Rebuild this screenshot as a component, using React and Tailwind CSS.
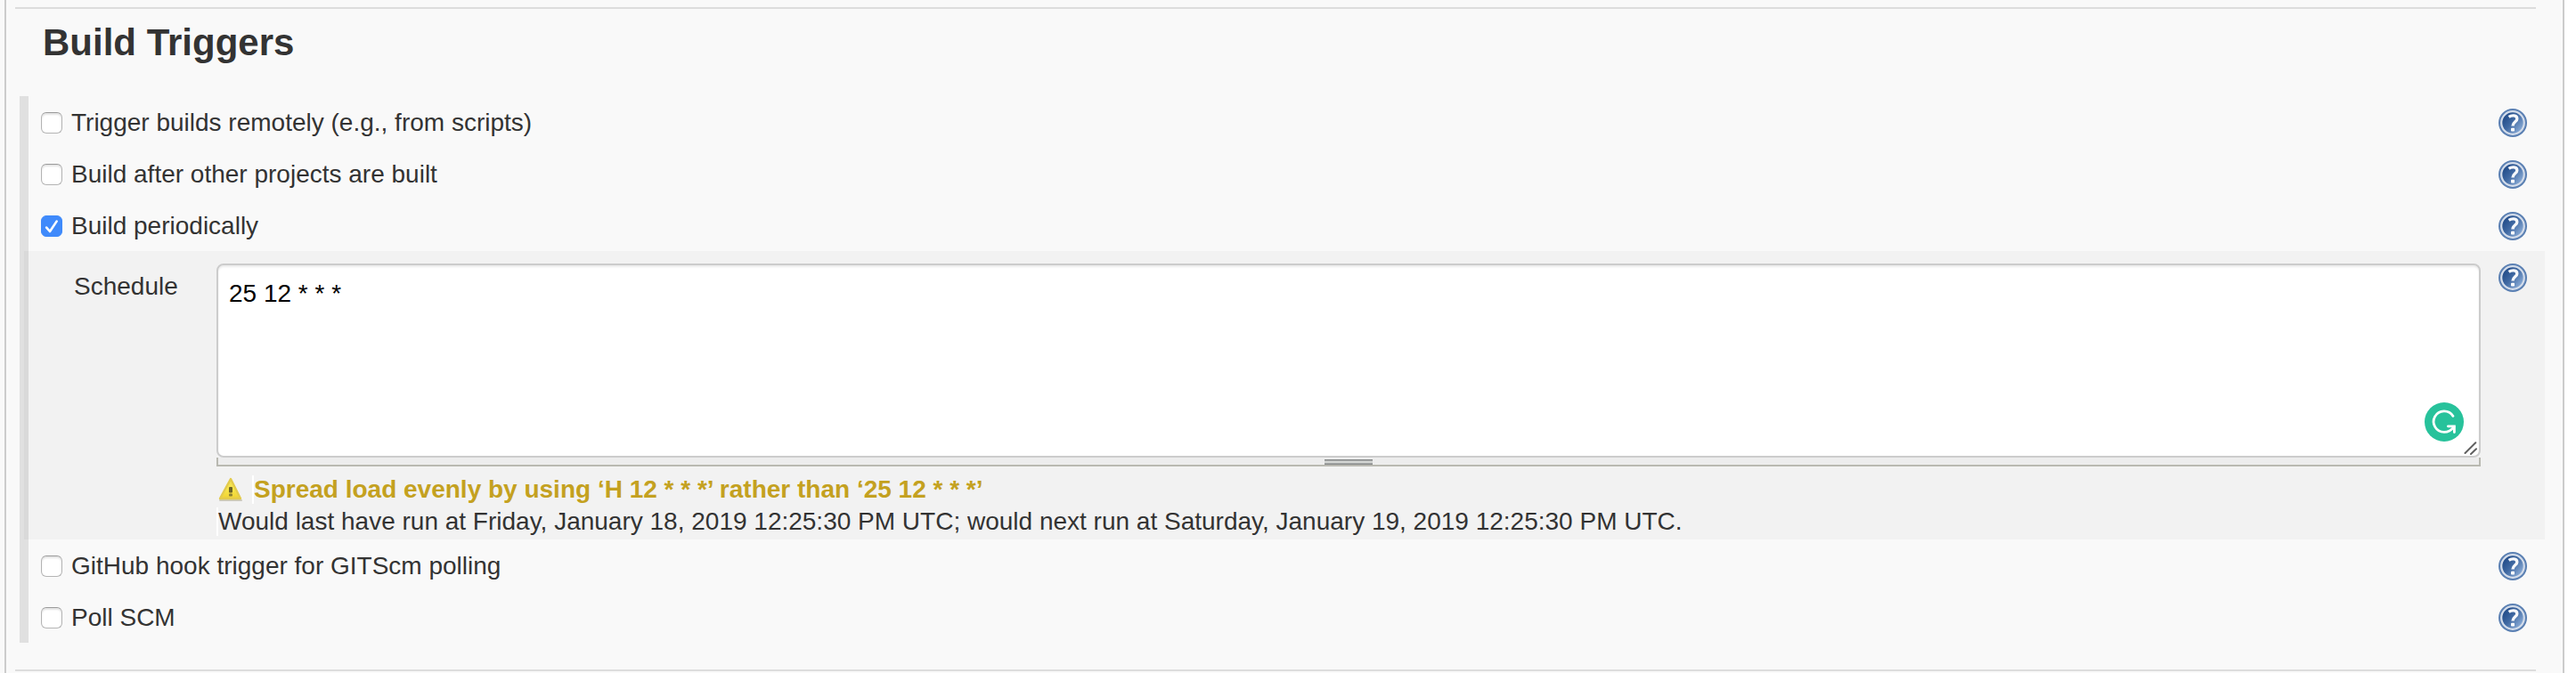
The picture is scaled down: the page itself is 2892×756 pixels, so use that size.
import { useState } from "react";

function HelpIcon() {
  return (
    <svg viewBox="0 0 32 32" className="block size-8" aria-hidden="true">
      <defs>
        <linearGradient id="helpFill" x1="0.1" y1="0.2" x2="0.9" y2="0.85">
          <stop offset="0" stopColor="#204a87" />
          <stop offset="0.45" stopColor="#416aa3" />
          <stop offset="1" stopColor="#8fb0da" />
        </linearGradient>
      </defs>
      <circle cx="16" cy="16" r="16" fill="#5b80b3" />
      <circle cx="16" cy="16" r="12.8" fill="url(#helpFill)" stroke="#d3dcea" strokeWidth="2.2" />
      <path
        d="M11.6 9.4C14.6 7.2 20.8 7 20.8 11.4C20.8 14.8 16 14.8 16 19.6"
        fill="none"
        stroke="#f6f8fb"
        strokeWidth="3.4"
      />
      <rect x="14" y="21.8" width="4" height="3.8" rx="0.8" fill="#fff" />
    </svg>
  );
}

function HelpButton({ topic }) {
  return (
    <button type="button" aria-label={`Help for ${topic}`} className="mr-5 size-8 shrink-0 rounded-full">
      <HelpIcon />
    </button>
  );
}

function WarningIcon() {
  return (
    <svg viewBox="0 0 32 32" className="size-8 shrink-0" aria-hidden="true">
      <defs>
        <linearGradient id="warnFill" x1="0" y1="0" x2="0" y2="1">
          <stop offset="0" stopColor="#f0dc5a" />
          <stop offset="0.5" stopColor="#f8e64c" />
          <stop offset="1" stopColor="#efd233" />
        </linearGradient>
      </defs>
      <path d="M4 28H28" stroke="#b5b19a" strokeWidth="2" strokeLinecap="round" opacity="0.6" />
      <path
        d="M16 4L27 26H4Z"
        fill="url(#warnFill)"
        stroke="#e3cb4c"
        strokeWidth="2.4"
        strokeLinejoin="round"
      />
      <rect x="14" y="13" width="4" height="6.5" rx="1" fill="#6b6328" />
      <rect x="14" y="20.5" width="4" height="3" rx="1" fill="#8a8035" />
    </svg>
  );
}

function GrammarBadge() {
  return (
    <svg viewBox="0 0 44 44" className="block size-11" aria-hidden="true">
      <circle cx="22" cy="22" r="22" fill="#27c29b" />
      <path
        d="M32 15.4A11.8 11.8 0 1 0 22 33.4C27 33.4 30.6 30.6 33 27.6"
        fill="none"
        stroke="#fff"
        strokeWidth="2.8"
        strokeLinecap="round"
      />
      <path d="M26.4 26.8H33.4V33.6" fill="none" stroke="#fff" strokeWidth="2.8" strokeLinecap="round" />
    </svg>
  );
}

function TriggerRow({ id, label, defaultChecked = false }) {
  const [checked, setChecked] = useState(defaultChecked);
  return (
    <div className="flex h-[58px] items-center pt-[2px]">
      <span className="relative ml-[14px] block size-6 shrink-0">
        <input
          id={id}
          type="checkbox"
          checked={checked}
          onChange={(e) => setChecked(e.target.checked)}
          className="block size-6 appearance-none rounded-[6px] border border-[#b4b4b4] border-t-[#9a9a9a] bg-white shadow-[inset_0_2px_2px_#e4e4e4] checked:border-[#3f8afb] checked:bg-[#3f8afb] checked:shadow-none"
        />
        {checked && (
          <svg viewBox="0 0 24 24" className="pointer-events-none absolute inset-0 size-6" aria-hidden="true">
            <path
              d="M6.2 13.6L10 18L17.6 6.6"
              fill="none"
              stroke="#fff"
              strokeWidth="2.6"
              strokeLinecap="round"
              strokeLinejoin="round"
            />
          </svg>
        )}
      </span>
      <label htmlFor={id} className="ml-[10px] flex-1 leading-8">
        {label}
      </label>
      <HelpButton topic={label} />
    </div>
  );
}

function SchedulePanel() {
  return (
    <div className="-ml-[5px] flex items-start bg-black/[0.028] pt-[14px] pb-[2px]">
      <label htmlFor="schedule" className="ml-14 w-[160px] shrink-0 pt-[10px] leading-8">
        Schedule
      </label>
      <div className="min-w-0 flex-1">
        <div className="relative">
          <textarea
            id="schedule"
            defaultValue="25 12 * * *"
            className="block h-[218px] w-full resize-none rounded-[8px] border-2 border-[#ccc] bg-white px-3 py-4 leading-8 text-black shadow-[inset_0_2px_2px_#ececec] outline-none"
          />
          <span className="absolute right-[19px] bottom-[18px]">
            <GrammarBadge />
          </span>
          <svg viewBox="0 0 16 16" className="absolute right-1 bottom-[3px] size-4" aria-hidden="true">
            <path d="M2.5 14L14.3 2.3M9 15L15 9.3" stroke="#606060" strokeWidth="2" strokeLinecap="round" />
          </svg>
        </div>
        <div className="flex h-[10px] justify-center border-x-2 border-b-2 border-[#b9b9b1] bg-[#ededed] pt-[2px]">
          <div className="h-[6px] w-[54px] border-y border-[#888a8a] bg-[#d2d4d2] shadow-[inset_0_1px_#a6a8a8,inset_0_-1px_#a6a8a8]" />
        </div>
        <p className="mt-2 flex h-9 items-center font-bold text-[#c4a120]">
          <WarningIcon />
          <span className="ml-2 border-l-2 border-white leading-8">
            Spread load evenly by using ‘H 12 * * *’ rather than ‘25 12 * * *’
          </span>
        </p>
        <p className="flex h-9 items-center">
          <span className="border-l-2 border-white leading-8">
            Would last have run at Friday, January 18, 2019 12:25:30 PM UTC; would next run at Saturday, January 19,
            2019 12:25:30 PM UTC.
          </span>
        </p>
      </div>
      <div className="ml-5 flex">
        <HelpButton topic="Schedule" />
      </div>
    </div>
  );
}

export default function App() {
  return (
    <div className="bg-white pr-[13px] font-['Liberation_Sans',Arial,sans-serif] text-[28px] text-[#333]">
      <div className="bg-[#f9f9f9] pl-[5px]">
        <main className="border-x-2 border-[#ccc] pt-2 pb-[2px] pl-[10px]">
          <section>
            <hr className="mr-[30px] border-t-2 border-[#ddd]" />
            <h1 className="mt-3 pl-[31px] text-[42px] leading-[52px] font-bold">Build Triggers</h1>
            <div className="mt-[34px] mr-5 ml-[5px] border-l-[10px] border-[#e0e0e0]">
              <TriggerRow id="remote" label="Trigger builds remotely (e.g., from scripts)" />
              <TriggerRow id="after" label="Build after other projects are built" />
              <TriggerRow id="periodic" label="Build periodically" defaultChecked />
              <SchedulePanel />
              <TriggerRow id="github" label="GitHub hook trigger for GITScm polling" />
              <TriggerRow id="poll" label="Poll SCM" />
            </div>
            <hr className="mt-[30px] mr-[30px] border-t-2 border-[#ddd]" />
          </section>
        </main>
      </div>
    </div>
  );
}
